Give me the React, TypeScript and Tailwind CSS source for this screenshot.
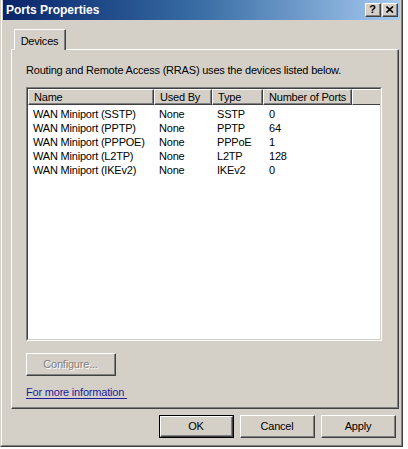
import React from 'react';

const font = { fontFamily: '"Liberation Sans", Arial, sans-serif' };

const devices = [
  { name: 'WAN Miniport (SSTP)', usedBy: 'None', type: 'SSTP', ports: '0' },
  { name: 'WAN Miniport (PPTP)', usedBy: 'None', type: 'PPTP', ports: '64' },
  { name: 'WAN Miniport (PPPOE)', usedBy: 'None', type: 'PPPoE', ports: '1' },
  { name: 'WAN Miniport (L2TP)', usedBy: 'None', type: 'L2TP', ports: '128' },
  { name: 'WAN Miniport (IKEv2)', usedBy: 'None', type: 'IKEv2', ports: '0' },
];

function HeaderCell({ label, w }: { label: string; w: string }) {
  return (
    <div className={`${w} h-[16px] shrink-0 border-t border-l border-white border-r border-r-[#404040] border-b border-b-[#404040]`}>
      <div className="h-full border-r border-b border-[#808080] pl-[5px] leading-[14px]">{label}</div>
    </div>
  );
}

function Button({ label, isDefault, disabled, w = 'w-[75px]' }: { label: string; isDefault?: boolean; disabled?: boolean; w?: string }) {
  return (
    <div className={`${w} h-[23px] ${isDefault ? 'border border-black' : ''}`}>
      <div className="h-full border-t border-l border-white border-r border-b border-r-[#404040] border-b-[#404040]">
        <div
          className={`h-full border-r border-b border-[#808080] flex items-center justify-center ${
            disabled ? 'text-[#808080] [text-shadow:1px_1px_0_#ffffff]' : 'text-black'
          }`}
        >
          {label}
        </div>
      </div>
    </div>
  );
}

function TitleButton({ children }: { children: React.ReactNode }) {
  return (
    <div className="w-[16px] h-[14px] bg-[#d4d0c8] border-t border-l border-white border-r border-b border-r-[#404040] border-b-[#404040]">
      <div className="h-full border-r border-b border-[#808080] flex items-center justify-center">{children}</div>
    </div>
  );
}

export default function App() {
  return (
    <div className="w-[408px] h-[449px] bg-white tracking-[-0.2px] text-[11px] text-black" style={font}>
      <div className="w-[403px] h-[447px] bg-[#d4d0c8] border-l border-l-[#d4d0c8] border-r border-r-[#404040] border-b border-b-[#404040]">
        <div className="h-full pl-[1px] border-l border-l-white border-r border-r-[#808080] border-b border-b-[#808080] flex flex-col">
          {/* title bar */}
          <div className="h-[20px] mr-[1px] bg-gradient-to-r from-[#0a246a] via-[#3a6ea5] to-[#a6caf0] flex items-center pl-[3px] pr-[2px]">
            <span className="text-white font-bold text-[12px] tracking-normal">Ports Properties</span>
            <div className="ml-auto flex">
              <TitleButton>
                <span className="font-bold text-[11px] leading-none tracking-normal">?</span>
              </TitleButton>
              <div className="ml-[1px]">
                <TitleButton>
                  <svg width="8" height="7" viewBox="0 0 8 7">
                    <path d="M0.5 0.5 L7 6.5 M7 0.5 L0.5 6.5" stroke="#000" strokeWidth="1.6" />
                  </svg>
                </TitleButton>
              </div>
            </div>
          </div>

          {/* tabs */}
          <div className="mt-[9px] ml-[8px] flex h-[20px]">
            <div className="ml-[3px] w-[52px] h-[21px] bg-[#d4d0c8] border-t border-l border-white border-r border-r-[#404040] relative z-10">
              <div className="h-full border-r border-[#808080] flex items-start justify-center pt-[3px]">Devices</div>
            </div>
          </div>

          {/* pane */}
          <div className="ml-[8px] w-[388px] h-[360px] border-t border-l border-white border-r border-b border-r-[#404040] border-b-[#404040]">
            <div className="h-full border-r border-b border-[#808080] pl-[14px] pt-[13px] flex flex-col">
              <div className="leading-[14px]">Routing and Remote Access (RRAS) uses the devices listed below.</div>

              <div className="mt-[10px] w-[356px] h-[254px] border-t border-l border-[#808080] border-r border-b border-r-white border-b-white">
                <div className="h-full bg-white border-t border-l border-[#404040] border-r border-b border-r-[#d4d0c8] border-b-[#d4d0c8] flex flex-col">
                  <div className="flex bg-[#d4d0c8]">
                    <HeaderCell label="Name" w="w-[126px]" />
                    <HeaderCell label="Used By" w="w-[58px]" />
                    <HeaderCell label="Type" w="w-[51px]" />
                    <HeaderCell label="Number of Ports" w="w-[89px]" />
                    <div className="flex-1 h-[16px] border-t border-l border-white border-b border-b-[#404040]" />
                  </div>
                  <div className="pt-[2px] flex flex-col">
                    {devices.map((d) => (
                      <div key={d.name} className="flex h-[14px] leading-[14px]">
                        <div className="w-[126px] pl-[5px]">{d.name}</div>
                        <div className="w-[58px] pl-[5px]">{d.usedBy}</div>
                        <div className="w-[51px] pl-[5px]">{d.type}</div>
                        <div className="w-[89px] pl-[6px]">{d.ports}</div>
                      </div>
                    ))}
                  </div>
                </div>
              </div>

              <div className="mt-[12px]">
                <Button label="Configure..." disabled w="w-[90px]" />
              </div>

              <div className="mt-[9px] leading-[14px]">
                <span className="text-[#1c1ca0] underline underline-offset-[2px]">For more information&nbsp;</span>
              </div>
            </div>
          </div>

          {/* dialog buttons */}
          <div className="mt-[6px] flex gap-[6px] pl-[156px]">
            <Button label="OK" isDefault />
            <Button label="Cancel" />
            <Button label="Apply" />
          </div>
        </div>
      </div>
    </div>
  );
}
